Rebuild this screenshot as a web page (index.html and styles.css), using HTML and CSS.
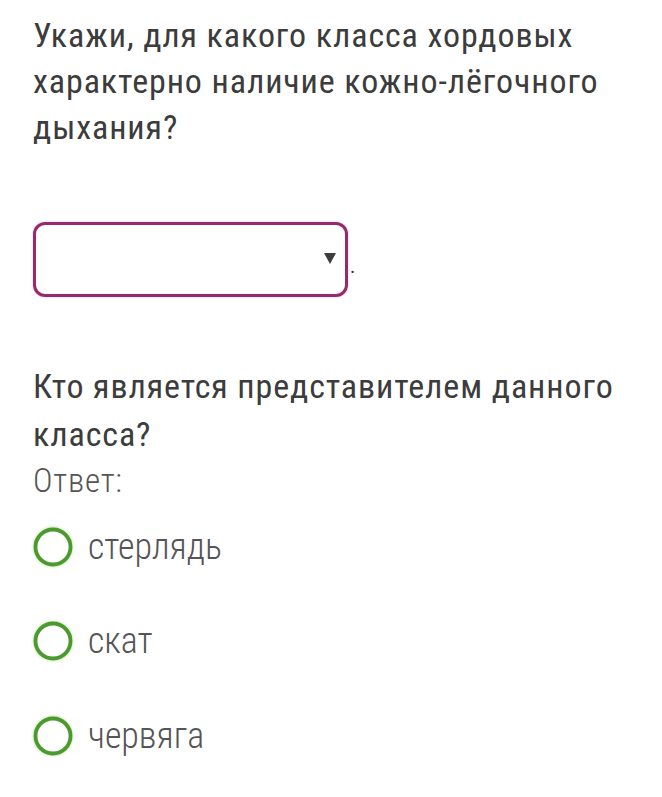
FILE: index.html
```html
<!DOCTYPE html>
<html lang="ru">

<head>
  <meta charset="UTF-8" />
  <title>Тест: хордовые</title>
  <link rel="stylesheet" href="styles.css">
</head>

<body>
  <div class="task">
    <p class="question">Укажи, для какого класса хордовых характерно наличие кожно-лёгочного дыхания?</p>

    <div class="answer-line">
      <div class="select">
        <svg class="arrow" width="12" height="11" viewBox="0 0 12 11">
          <polygon points="0,0 12,0 6,11" />
        </svg>
      </div>
      <span class="dot">.</span>
    </div>

    <p class="question second">Кто является представителем данного класса?</p>
    <p class="label">Ответ:</p>

    <div class="options">
      <label class="option">
        <svg class="radio" width="40" height="40" viewBox="0 0 40 40">
          <circle cx="20" cy="20" r="17.5" />
        </svg>
        <span>стерлядь</span>
      </label>
      <label class="option">
        <svg class="radio" width="40" height="40" viewBox="0 0 40 40">
          <circle cx="20" cy="20" r="17.5" />
        </svg>
        <span>скат</span>
      </label>
      <label class="option">
        <svg class="radio" width="40" height="40" viewBox="0 0 40 40">
          <circle cx="20" cy="20" r="17.5" />
        </svg>
        <span>червяга</span>
      </label>
    </div>
  </div>
</body>

</html>
```
FILE: styles.css
```css
* {
  box-sizing: border-box;
}

body {
  margin: 0;
  padding: 0;
  background: #fff;
  font-family: Roboto, 'Noto Sans', sans-serif;
  font-stretch: condensed;
  color: #3c3c3c;
}

.task {
  padding: 12px 20px 0 33px;
}

.question {
  margin: 0;
  font-size: 34px;
  line-height: 46px;
  letter-spacing: 0.9px;
}

.question.second {
  margin-top: 65px;
  line-height: 48px;
}

.answer-line {
  display: flex;
  align-items: flex-end;
  margin-top: 72px;
}

.select {
  width: 315px;
  height: 75px;
  border: 3.5px solid #972a6d;
  border-radius: 12px;
  box-shadow: 0 0 2px rgba(214, 96, 176, 0.45);
  display: flex;
  align-items: center;
  justify-content: flex-end;
  padding-right: 9px;
}

.arrow {
  display: block;
  margin-top: -2px;
  fill: #3d3d3d;
}

.dot {
  font-size: 20px;
  line-height: 20px;
  margin: 0 0 21px 2px;
  color: #333;
}

.label {
  margin: 0;
  font-size: 33px;
  font-weight: 300;
  line-height: 46px;
  letter-spacing: 0.8px;
  color: #555;
}

.options {
  display: flex;
  flex-direction: column;
  gap: 54.5px;
  margin-top: 22.5px;
}

.option {
  display: flex;
  align-items: center;
  gap: 15px;
  height: 40px;
  font-size: 36px;
  font-weight: 300;
  color: #555;
}

.radio {
  display: block;
  flex-shrink: 0;
  filter: drop-shadow(0 0 1.5px rgba(140, 214, 90, 0.7));
}

.radio circle {
  fill: #fff;
  stroke: #4c9a2f;
  stroke-width: 3.8;
}
```
